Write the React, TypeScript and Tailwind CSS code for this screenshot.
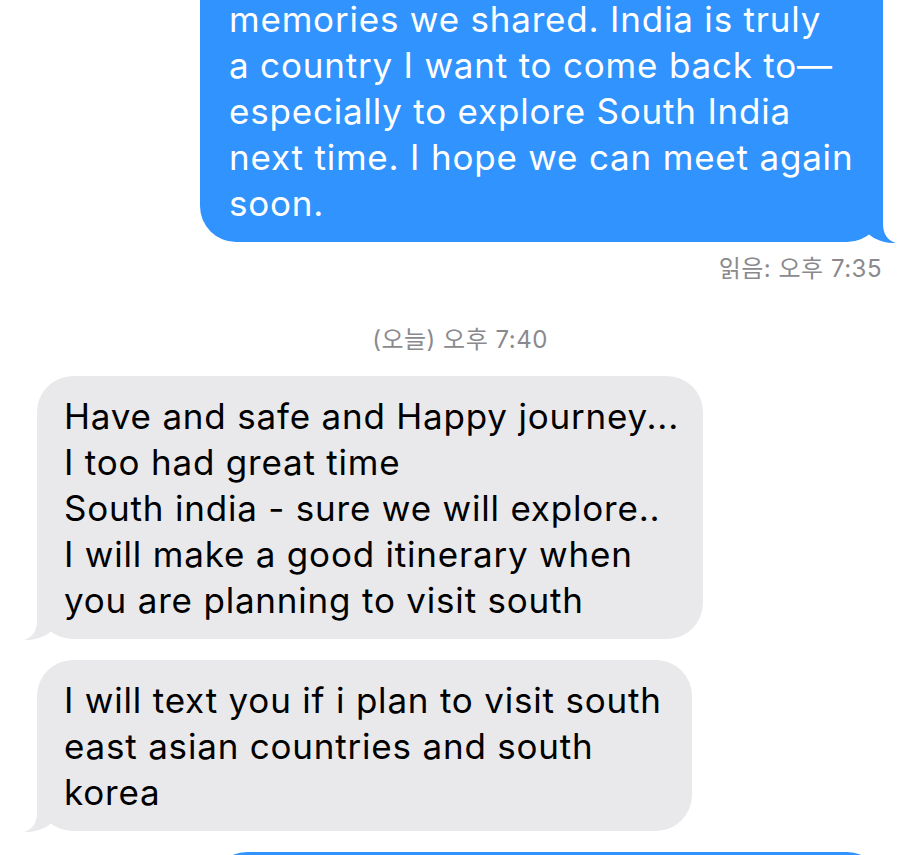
const FONT = "font-['Inter','Noto_Sans_CJK_KR',sans-serif]"

type Side = "left" | "right"

// iOS style bubble tail, drawn over the bottom corner of the bubble
const Tail = ({ side, color }: { side: Side; color: string }) => (
  <svg
    width="50"
    height="46"
    viewBox="0 0 50 46"
    className={
      side === "right"
        ? "absolute -right-[14px] -bottom-[1px]"
        : "absolute -left-[14px] -bottom-[1px] -scale-x-100"
    }
  >
    <path
      d="M36 0 L36 27 C36 37 41 44 49 46 C40 46.5 29 43.5 22 37.5 L12 0 Z"
      fill={color}
    />
  </svg>
)

interface BubbleProps {
  lines: string[]
  side: Side
  width: string
  tail?: boolean
  className?: string
}

const Bubble = ({ lines, side, width, tail = true, className = "" }: BubbleProps) => {
  const sent = side === "right"
  return (
    <div
      className={`relative ${width} rounded-[36px] pr-4 pt-[17px] pb-4 text-[35px] leading-[46px] tracking-[0.8px] whitespace-nowrap ${
        sent
          ? "self-end mr-[37px] pl-[29px] bg-[#3093fe] text-white"
          : "ml-[37px] pl-[27px] bg-[#e9e9eb] text-black"
      } ${className}`}
    >
      {lines.map((l, i) => (
        <div key={i}>{l}</div>
      ))}
      {tail && <Tail side={side} color={sent ? "#3093fe" : "#e9e9eb"} />}
    </div>
  )
}

export default function App() {
  return (
    <div className={`w-[920px] h-[855px] overflow-hidden bg-white flex flex-col ${FONT}`}>
      <Bubble
        side="right"
        width="w-[683px]"
        className="-mt-[64px] pt-[60px]"
        lines={[
          "memories we shared. India is truly",
          "a country I want to come back to—",
          "especially to explore South India",
          "next time. I hope we can meet again",
          "soon.",
        ]}
      />

      <div className="mt-[12px] mr-[38px] self-end text-[24px] leading-[30px] tracking-[0.5px] text-[#8a8a8e]">
        읽음: 오후 7:35
      </div>

      <div className="mt-[41px] self-center text-[24px] leading-[30px] tracking-[0.5px] text-[#8a8a8e]">
        (오늘) 오후 7:40
      </div>

      <Bubble
        side="left"
        width="w-[666px]"
        className="mt-[21px]"
        lines={[
          "Have and safe and Happy journey...",
          "I too had great time",
          "South india - sure we will explore..",
          "I will make a good itinerary when",
          "you are planning to visit south",
        ]}
      />

      <Bubble
        side="left"
        width="w-[655px]"
        className="mt-[21px]"
        lines={[
          "I will text you if i plan to visit south",
          "east asian countries and south",
          "korea",
        ]}
      />

      <div className="mt-[21px] mr-[37px] self-end w-[672px] h-[80px] shrink-0 rounded-[36px] bg-[#3093fe]" />
    </div>
  )
}
